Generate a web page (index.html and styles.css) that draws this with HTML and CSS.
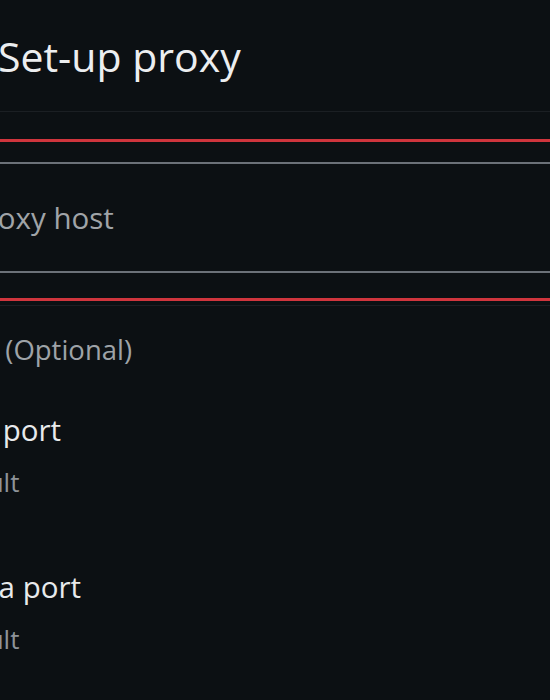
FILE: index.html
```html
<!DOCTYPE html>
<html lang="en">
<head>
<meta charset="utf-8">
<title>Set-up proxy</title>
<link rel="stylesheet" href="styles.css">
</head>
<body>
<div class="screen">
  <header class="header">
    <h1 class="title">Set-up proxy</h1>
  </header>
  <div class="field-wrap">
    <div class="input">
      <div class="input-text">Proxy host</div>
    </div>
  </div>
  <div class="divider"></div>
  <div class="label">Port (Optional)</div>
  <div class="item item-first">
    <div class="item-title http">HTTP port</div>
    <div class="item-sub">Default</div>
  </div>
  <div class="item">
    <div class="item-title media">Media port</div>
    <div class="item-sub">Default</div>
  </div>
</div>
</body>
</html>
```

FILE: styles.css
```css
html, body {
  margin: 0;
  padding: 0;
  background: #0c1013;
}
.screen {
  width: 550px;
  height: 700px;
  overflow: hidden;
  background: #0c1013;
  font-family: "Open Sans", "Noto Sans", sans-serif;
  white-space: nowrap;
}
.header {
  height: 112px;
  border-bottom: 1px solid #1b1f23;
  box-sizing: border-box;
  padding-top: 31px;
}
.title {
  margin: 0 0 0 -2px;
  font-size: 41px;
  line-height: 50px;
  font-weight: 400;
  color: #eceef0;
}
.field-wrap {
  margin-top: 27px;
  border-top: 3px solid #d0353d;
  border-bottom: 3px solid #d0353d;
  padding: 20px 0 25px;
}
.input {
  border-top: 2px solid #6c7178;
  border-bottom: 2px solid #6c7178;
  padding: 34px 0 33px;
}
.input-text {
  font-size: 29.5px;
  line-height: 40px;
  color: #a0a4a8;
  text-indent: -32px;
}
.divider {
  margin-top: 4px;
  height: 1px;
  background: #1b1f23;
}
.label {
  margin-top: 27px;
  font-size: 27.5px;
  line-height: 34px;
  color: #9ea3a8;
  text-indent: -56px;
}
.item {
  display: flex;
  flex-direction: column;
  gap: 16px;
  margin-top: 69px;
}
.item-first {
  margin-top: 44px;
}
.item-title {
  font-size: 29.5px;
  line-height: 38px;
  color: #e8eaec;
}
.http {
  text-indent: -77px;
}
.media {
  text-indent: -70px;
}
.item-sub {
  font-size: 26px;
  line-height: 34px;
  color: #8e9398;
  text-indent: -69px;
}
```
